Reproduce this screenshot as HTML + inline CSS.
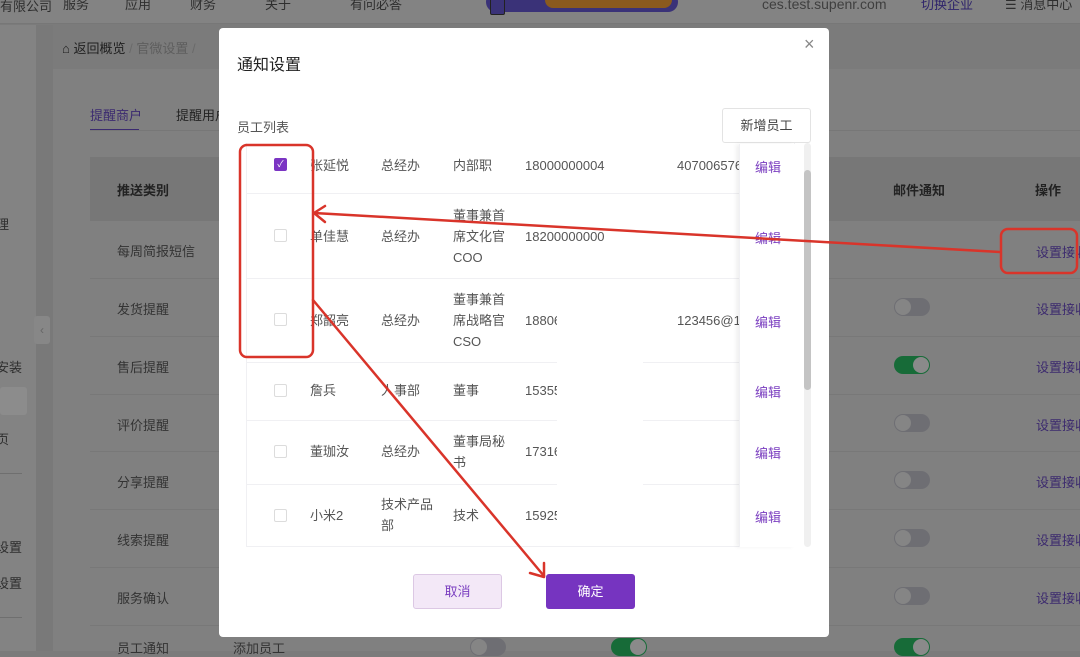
<!DOCTYPE html>
<html><head><meta charset="utf-8"><style>
*{margin:0;padding:0;box-sizing:border-box}
body{width:1080px;height:651px;overflow:hidden;position:relative;background:#7b7b7b;font-family:"Liberation Sans","Noto Sans CJK SC",sans-serif;font-size:13px;color:#333}
.a{position:absolute;white-space:nowrap}
.g{color:#2e2e2e}
.bg-t{color:#333;font-size:13px}
.tg{position:absolute;width:36px;height:18px;border-radius:9px;background:#6e6e73}
.tg:after{content:"";position:absolute;left:1px;top:1px;width:16px;height:16px;border-radius:8px;background:#858585}
.tg.on{background:#176b38}
.tg.on:after{left:19px;background:#8a8a8a}
.lk{color:#3c2a6e}
.m{position:absolute;left:219px;top:28px;width:610px;height:609px;background:#fff;border-radius:4px}
.cb{position:absolute;width:13px;height:13px;border:1px solid #dcdcdc;border-radius:2px;background:#fff}
.c{position:absolute;font-size:13px;color:#555;white-space:nowrap;line-height:21px}
.e{position:absolute;color:#7b3fc0;font-size:13px}
.hr{position:absolute;left:27px;width:549px;height:1px;background:#f0f0f3}
</style></head><body>
<div class="a" style="left:0;top:0;width:1080px;height:24px;background:#838383;border-bottom:1px solid #777"></div>
<div class="a g" style="left:0;top:-4px;font-size:13px">有限公司</div>
<div class="a g" style="left:63px;top:-6px;font-size:13px">服务</div>
<div class="a g" style="left:125px;top:-6px;font-size:13px">应用</div>
<div class="a g" style="left:190px;top:-6px;font-size:13px">财务</div>
<div class="a g" style="left:265px;top:-6px;font-size:13px">关于</div>
<div class="a g" style="left:350px;top:-6px;font-size:13px">有问必答</div>
<div class="a" style="left:486px;top:-8px;width:192px;height:20px;background:#3a3278;border-radius:10px"></div>
<div class="a" style="left:545px;top:-8px;width:127px;height:16px;background:#8a5a1e;border-radius:8px"></div>
<div class="a" style="left:490px;top:-6px;width:15px;height:21px;border:1px solid #222;border-radius:2px;background:#3a3278"></div>
<div class="a" style="left:762px;top:-4px;font-size:14px;color:#3f3f3f">ces.test.supenr.com</div>
<div class="a" style="left:921px;top:-6px;font-size:13px;color:#2f246b">切换企业</div>
<div class="a g" style="left:1005px;top:-6px;font-size:13px">☰ 消息中心</div>
<div class="a" style="left:0;top:25px;width:36px;height:626px;background:#838383"></div>
<div class="a" style="left:36px;top:25px;width:17px;height:626px;background:#797979"></div>
<div class="a g" style="left:-4px;top:214px">理</div>
<div class="a g" style="left:-4px;top:357px">安装</div>
<div class="a" style="left:0;top:387px;width:27px;height:28px;background:#8c8c8c;border-radius:3px"></div>
<div class="a g" style="left:-4px;top:429px">页</div>
<div class="a" style="left:0;top:473px;width:22px;height:1px;background:#6f6f6f"></div>
<div class="a g" style="left:-4px;top:537px">设置</div>
<div class="a g" style="left:-4px;top:573px">设置</div>
<div class="a" style="left:0;top:617px;width:22px;height:1px;background:#6f6f6f"></div>
<div class="a" style="left:34px;top:316px;width:16px;height:28px;background:#878787;border-radius:3px;color:#666;font-size:12px;text-align:center;line-height:28px">‹</div>
<div class="a" style="left:62px;top:38px;color:#1f1f1f;font-size:13px">⌂ 返回概览 <span style="color:#6a6a6a">/</span> <span style="color:#5e5e5e">官微设置</span> <span style="color:#6a6a6a">/</span></div>
<div class="a" style="left:53px;top:69px;width:1027px;height:582px;background:#808080"></div>
<div class="a" style="left:90px;top:105px;color:#3b2a70;font-size:13px">提醒商户</div>
<div class="a" style="left:90px;top:129px;width:49px;height:2px;background:#3b2a70"></div>
<div class="a" style="left:176px;top:105px;color:#222;font-size:13px">提醒用户</div>
<div class="a" style="left:90px;top:130px;width:990px;height:1px;background:#777"></div>
<div class="a" style="left:90px;top:157px;width:990px;height:64px;background:#777"></div>
<div class="a" style="left:117px;top:180px;font-weight:bold;color:#222">推送类别</div>
<div class="a" style="left:893px;top:180px;font-weight:bold;color:#222">邮件通知</div>
<div class="a" style="left:1035px;top:180px;font-weight:bold;color:#222">操作</div>
<div class="a bg-t" style="left:117px;top:241px">每周简报短信</div>
<div class="a bg-t" style="left:117px;top:299px">发货提醒</div>
<div class="a bg-t" style="left:117px;top:357px">售后提醒</div>
<div class="a bg-t" style="left:117px;top:415px">评价提醒</div>
<div class="a bg-t" style="left:117px;top:472px">分享提醒</div>
<div class="a bg-t" style="left:117px;top:530px">线索提醒</div>
<div class="a bg-t" style="left:117px;top:588px">服务确认</div>
<div class="a bg-t" style="left:117px;top:638px">员工通知</div>
<div class="a bg-t" style="left:233px;top:638px">添加员工</div>
<div class="a" style="left:90px;top:278px;width:990px;height:1px;background:#787878"></div>
<div class="a" style="left:90px;top:336px;width:990px;height:1px;background:#787878"></div>
<div class="a" style="left:90px;top:394px;width:990px;height:1px;background:#787878"></div>
<div class="a" style="left:90px;top:451px;width:990px;height:1px;background:#787878"></div>
<div class="a" style="left:90px;top:509px;width:990px;height:1px;background:#787878"></div>
<div class="a" style="left:90px;top:567px;width:990px;height:1px;background:#787878"></div>
<div class="a" style="left:90px;top:625px;width:990px;height:1px;background:#787878"></div>
<div class="tg" style="left:894px;top:298px"></div>
<div class="tg on" style="left:894px;top:356px"></div>
<div class="tg" style="left:894px;top:414px"></div>
<div class="tg" style="left:894px;top:471px"></div>
<div class="tg" style="left:894px;top:529px"></div>
<div class="tg" style="left:894px;top:587px"></div>
<div class="tg on" style="left:894px;top:638px"></div>
<div class="tg on" style="left:611px;top:638px"></div>
<div class="tg" style="left:470px;top:638px"></div>
<div class="a lk" style="left:1036px;top:242px">设置接收</div>
<div class="a lk" style="left:1036px;top:299px">设置接收</div>
<div class="a lk" style="left:1036px;top:357px">设置接收</div>
<div class="a lk" style="left:1036px;top:415px">设置接收</div>
<div class="a lk" style="left:1036px;top:472px">设置接收</div>
<div class="a lk" style="left:1036px;top:530px">设置接收</div>
<div class="a lk" style="left:1036px;top:588px">设置接收</div>
<div class="m">
<div class="a" style="left:18px;top:23px;font-size:16px;color:#222">通知设置</div>
<div class="a" style="left:585px;top:6px;font-size:18px;color:#888">×</div>
<div class="a" style="left:18px;top:89px;font-size:13px;color:#555">员工列表</div>
<div class="a" style="left:503px;top:80px;width:89px;height:35px;border:1px solid #e3e3e3;border-radius:3px;text-align:center;line-height:33px;font-size:13px;color:#444">新增员工</div>
<div class="a" style="left:27px;top:115px;width:549px;height:404px;border:1px solid #f0f0f3;border-top:none"></div>
<div class="hr" style="top:165px"></div>
<div class="hr" style="top:250px"></div>
<div class="hr" style="top:334px"></div>
<div class="hr" style="top:392px"></div>
<div class="hr" style="top:456px"></div>
<div class="cb" style="left:55px;top:130px;background:#7b35c3;border-color:#7b35c3;color:#fff;font-size:9px;line-height:11px;text-align:center">✓</div>
<div class="cb" style="left:55px;top:201px"></div>
<div class="cb" style="left:55px;top:285px"></div>
<div class="cb" style="left:55px;top:356px"></div>
<div class="cb" style="left:55px;top:417px"></div>
<div class="cb" style="left:55px;top:481px"></div>
<div class="c" style="left:91px;top:127px">张延悦</div><div class="c" style="left:162px;top:127px">总经办</div><div class="c" style="left:234px;top:127px">内部职</div><div class="c" style="left:306px;top:127px">18000000004</div><div class="c" style="left:458px;top:127px">407006576</div>
<div class="c" style="left:91px;top:198px">单佳慧</div><div class="c" style="left:162px;top:198px">总经办</div><div class="c" style="left:234px;top:177px">董事兼首<br>席文化官<br>COO</div><div class="c" style="left:306px;top:198px">18200000000</div>
<div class="c" style="left:91px;top:282px">郑韶亮</div><div class="c" style="left:162px;top:282px">总经办</div><div class="c" style="left:234px;top:261px">董事兼首<br>席战略官<br>CSO</div><div class="c" style="left:306px;top:282px">18806</div><div class="c" style="left:458px;top:282px">123456@12</div>
<div class="c" style="left:91px;top:352px">詹兵</div><div class="c" style="left:162px;top:352px">人事部</div><div class="c" style="left:234px;top:352px">董事</div><div class="c" style="left:306px;top:352px">15355</div>
<div class="c" style="left:91px;top:413px">董珈汝</div><div class="c" style="left:162px;top:413px">总经办</div><div class="c" style="left:234px;top:403px">董事局秘<br>书</div><div class="c" style="left:306px;top:413px">17316</div>
<div class="c" style="left:91px;top:477px">小米2</div><div class="c" style="left:162px;top:466px">技术产品<br>部</div><div class="c" style="left:234px;top:477px">技术</div><div class="c" style="left:306px;top:477px">15925</div>
<div class="a" style="left:338px;top:251px;width:86px;height:267px;background:#fff"></div>
<div class="a" style="left:520px;top:116px;width:56px;height:403px;background:#fff;box-shadow:-3px 0 4px rgba(0,0,0,0.06);border-left:1px solid #f0f0f3"></div>
<div class="e" style="left:536px;top:129px">编辑</div>
<div class="e" style="left:536px;top:200px">编辑</div>
<div class="e" style="left:536px;top:284px">编辑</div>
<div class="e" style="left:536px;top:354px">编辑</div>
<div class="e" style="left:536px;top:415px">编辑</div>
<div class="e" style="left:536px;top:479px">编辑</div>
<div class="a" style="left:585px;top:115px;width:7px;height:404px;background:#f0f0f0;border-radius:4px"></div>
<div class="a" style="left:585px;top:142px;width:7px;height:220px;background:#c4c4c4;border-radius:4px"></div>
<div class="a" style="left:194px;top:546px;width:89px;height:35px;background:#f3e8f7;border:1px solid #dcc8e4;border-radius:3px;text-align:center;line-height:33px;color:#7b3fc0">取消</div>
<div class="a" style="left:327px;top:546px;width:89px;height:35px;background:#7634c0;border-radius:3px;text-align:center;line-height:35px;color:#fff">确定</div>
</div>
<svg class="a" style="left:0;top:0" width="1080" height="651">
<g fill="none" stroke="#d9342a" stroke-width="2.5" stroke-linecap="round" stroke-linejoin="round">
<rect x="240" y="145" width="73" height="212" rx="7"/>
<rect x="1001" y="229" width="76" height="44" rx="7"/>
<line x1="1000" y1="252" x2="314" y2="213"/>
<polyline points="325,206 314,213 325,222"/>
<line x1="313" y1="300" x2="544" y2="576"/>
<polyline points="530,573 544,577 544,563"/>
</g>
</svg>
</body></html>
